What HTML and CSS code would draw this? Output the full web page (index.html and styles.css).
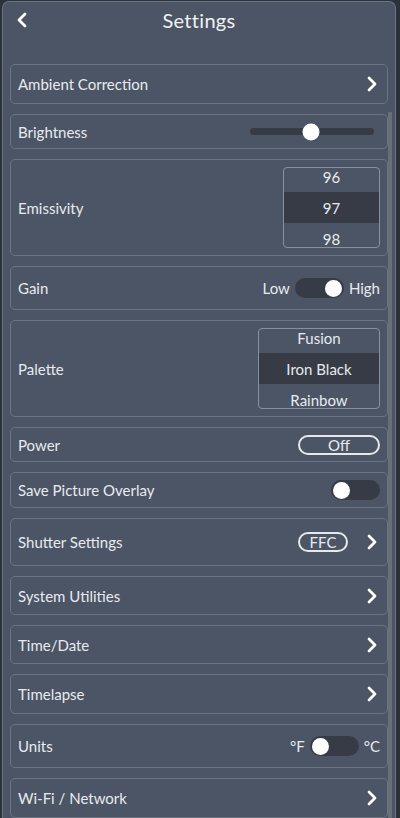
FILE: index.html
```html
<!DOCTYPE html>
<html>
<head>
<meta charset="utf-8">
<link rel="stylesheet" href="styles.css">
</head>
<body>
<div class="panel">
  <div class="header">
    <svg class="back" width="12" height="16" viewBox="0 0 12 16"><path d="M9 2 L3 8 L9 14" fill="none" stroke="#fff" stroke-width="2.8" stroke-linecap="round" stroke-linejoin="round"/></svg>
    <div class="title">Settings</div>
  </div>
  <div class="content">
    <div class="list">
      <div class="card h40">
        <span class="label">Ambient Correction</span>
        <svg class="chev" width="12" height="16" viewBox="0 0 12 16"><path d="M3 2 L9 8 L3 14" fill="none" stroke="#fff" stroke-width="2.8" stroke-linecap="round" stroke-linejoin="round"/></svg>
      </div>
      <div class="card h35">
        <span class="label">Brightness</span>
        <div class="slider"><div class="thumb" style="left:49%"></div></div>
      </div>
      <div class="card h97">
        <span class="label">Emissivity</span>
        <div class="picker narrow">
          <div class="picker-items">
            <div class="item">96</div>
            <div class="item selected">97</div>
            <div class="item">98</div>
          </div>
        </div>
      </div>
      <div class="card h44">
        <span class="label">Gain</span>
        <div class="controls">
          <span class="opt">Low</span>
          <div class="toggle on"><div class="knob"></div></div>
          <span class="opt">High</span>
        </div>
      </div>
      <div class="card h97">
        <span class="label">Palette</span>
        <div class="picker wide">
          <div class="picker-items">
            <div class="item">Fusion</div>
            <div class="item selected">Iron Black</div>
            <div class="item">Rainbow</div>
          </div>
        </div>
      </div>
      <div class="card h35">
        <span class="label">Power</span>
        <div class="pill power">Off</div>
      </div>
      <div class="card h36">
        <span class="label">Save Picture Overlay</span>
        <div class="toggle"><div class="knob"></div></div>
      </div>
      <div class="card h48">
        <span class="label">Shutter Settings</span>
        <div class="controls gap20">
          <div class="pill ffc">FFC</div>
          <svg class="chev" width="12" height="16" viewBox="0 0 12 16"><path d="M3 2 L9 8 L3 14" fill="none" stroke="#fff" stroke-width="2.8" stroke-linecap="round" stroke-linejoin="round"/></svg>
        </div>
      </div>
      <div class="card h39">
        <span class="label">System Utilities</span>
        <svg class="chev" width="12" height="16" viewBox="0 0 12 16"><path d="M3 2 L9 8 L3 14" fill="none" stroke="#fff" stroke-width="2.8" stroke-linecap="round" stroke-linejoin="round"/></svg>
      </div>
      <div class="card h39">
        <span class="label">Time/Date</span>
        <svg class="chev" width="12" height="16" viewBox="0 0 12 16"><path d="M3 2 L9 8 L3 14" fill="none" stroke="#fff" stroke-width="2.8" stroke-linecap="round" stroke-linejoin="round"/></svg>
      </div>
      <div class="card h40">
        <span class="label">Timelapse</span>
        <svg class="chev" width="12" height="16" viewBox="0 0 12 16"><path d="M3 2 L9 8 L3 14" fill="none" stroke="#fff" stroke-width="2.8" stroke-linecap="round" stroke-linejoin="round"/></svg>
      </div>
      <div class="card h44">
        <span class="label">Units</span>
        <div class="controls">
          <span class="opt">°F</span>
          <div class="toggle"><div class="knob"></div></div>
          <span class="opt">°C</span>
        </div>
      </div>
      <div class="card h40">
        <span class="label">Wi-Fi / Network</span>
        <svg class="chev" width="12" height="16" viewBox="0 0 12 16"><path d="M3 2 L9 8 L3 14" fill="none" stroke="#fff" stroke-width="2.8" stroke-linecap="round" stroke-linejoin="round"/></svg>
      </div>
    </div>
    <div class="scrollbar"></div>
  </div>
</div>
</body>
</html>
```
FILE: styles.css
```css
html, body {
  margin: 0;
  padding: 0;
}
body {
  background: #2c323b;
  height: 818px;
  overflow: hidden;
  font-family: Lato, "Noto Sans", sans-serif;
  color: #e8eaee;
}
.panel {
  box-sizing: border-box;
  margin: 1px 0 0 2px;
  width: 394px;
  height: 817px;
  background: #4b5566;
  border: 1px solid #6a7483;
  border-bottom: none;
  border-radius: 7px 7px 0 0;
  display: flex;
  flex-direction: column;
  overflow: hidden;
}
.header {
  height: 36px;
  display: grid;
  grid-template-columns: 1fr auto 1fr;
  align-items: center;
  padding: 0 0 0 13px;
  flex: none;
}
.back {
  display: block;
}
.title {
  font-size: 20px;
  color: #f0f1f3;
  letter-spacing: 0.3px;
  margin-left: -13px;
}
.content {
  display: flex;
  padding: 26px 3px 0 7px;
  flex: 1;
  min-height: 0;
}
.list {
  width: 378px;
  display: flex;
  flex-direction: column;
  gap: 10px;
  flex: none;
}
.scrollbar {
  width: 4px;
  margin-top: 48px;
  background: #667076;
  border-radius: 1px;
  flex: none;
}
.card {
  box-sizing: border-box;
  border: 1px solid #6a7483;
  border-radius: 5px;
  display: flex;
  align-items: center;
  justify-content: space-between;
  padding: 0 7px;
  flex: none;
}
.h35 { height: 35px; }
.h36 { height: 36px; }
.h39 { height: 39px; }
.h40 { height: 40px; }
.h44 { height: 44px; }
.h48 { height: 48px; }
.h97 { height: 97px; }
.label {
  font-size: 15px;
  line-height: 18px;
}
.chev {
  display: block;
  margin-right: 2px;
}
.controls {
  display: flex;
  align-items: center;
  gap: 5px;
}
.gap20 {
  gap: 18px;
}
.opt {
  font-size: 15px;
  line-height: 18px;
}
.slider {
  position: relative;
  width: 124px;
  height: 7px;
  border-radius: 4px;
  background: #363b46;
  margin-right: 6px;
}
.thumb {
  position: absolute;
  top: 50%;
  width: 17px;
  height: 17px;
  border-radius: 50%;
  background: #fff;
  transform: translate(-50%, -50%);
}
.picker {
  box-sizing: border-box;
  height: 81px;
  border: 1px solid #8790a0;
  border-radius: 4px;
  overflow: hidden;
}
.narrow { width: 97px; }
.wide { width: 122px; }
.picker-items {
  margin-top: -7px;
}
.item {
  height: 31px;
  display: flex;
  align-items: center;
  justify-content: center;
  font-size: 15px;
}
.item.selected {
  background: #363b46;
}
.toggle {
  box-sizing: border-box;
  width: 49px;
  height: 20px;
  border-radius: 10px;
  background: #363b46;
  display: flex;
  align-items: center;
  padding: 0 2px;
}
.toggle.on {
  justify-content: flex-end;
}
.knob {
  width: 17px;
  height: 17px;
  border-radius: 50%;
  background: #fff;
}
.pill {
  box-sizing: border-box;
  height: 20px;
  border: 2px solid #e6e8ea;
  border-radius: 10px;
  display: flex;
  align-items: center;
  justify-content: center;
  font-size: 15px;
}
.power { width: 82px; }
.ffc { width: 50px; }
```
